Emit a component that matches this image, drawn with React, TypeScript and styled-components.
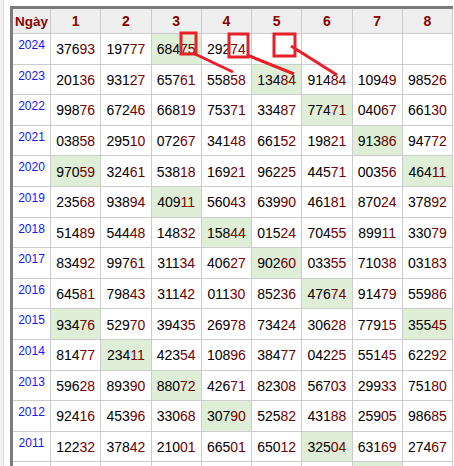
import React from "react";
import styled, { createGlobalStyle } from "styled-components";

const Global = createGlobalStyle`
  html, body { margin: 0; padding: 0; background: #ffffff; }
  body { font-family: "Liberation Sans", Arial, sans-serif; }
`;

const Page = styled.div`
  position: relative;
  display: flex;
  width: 454px;
  height: 466px;
  overflow: hidden;
`;

const SideStrip = styled.div`
  width: 3px;
  background: #f1f1f1;
  border-right: 1px solid #d6d6d6;
  flex: none;
`;

const Content = styled.div`
  padding: 6px 0 0 6px;
  flex: none;
`;

const Frame = styled.div`
  border-top: 3px solid #7b7b7b;
  border-left: 3px solid #7b7b7b;
`;

const Grid = styled.div`
  display: grid;
  grid-template-columns: 37px repeat(8, 49.25px);
  grid-template-rows: 24px;
  grid-auto-rows: 29.6px;
  gap: 1px;
  background: #cbcbcb;
  padding: 0 1px 1px 0;
`;

const HeadCell = styled.div<{ $wide?: boolean }>`
  background: #eeeeee;
  color: #8b0000;
  font-weight: bold;
  font-size: ${(p) => (p.$wide ? "14px" : "13.5px")};
  display: flex;
  align-items: center;
  justify-content: center;
`;

const YearCell = styled.div`
  background: #ffffff;
  color: #1414ff;
  font-size: 12px;
  text-align: center;
  padding-top: 4px;
`;

const NumCell = styled.div<{ $hit?: boolean }>`
  background: ${(p) => (p.$hit ? "#dfeed6" : "#ffffff")};
  color: #000000;
  font-size: 14px;
  display: flex;
  align-items: center;
  justify-content: center;
  padding-top: 1px;
`;

const Tail = styled.span`
  color: #720000;
`;

const Overlay = styled.svg`
  position: absolute;
  left: 0;
  top: 0;
  pointer-events: none;
`;

type Row = { year: string; nums: string[]; hits: number[] };

const rows: Row[] = [
  { year: "2024", nums: ["37693", "19777", "68475", "29274", "", "", "", ""], hits: [2] },
  { year: "2023", nums: ["20136", "93127", "65761", "55858", "13484", "91484", "10949", "98526"], hits: [4] },
  { year: "2022", nums: ["99876", "67246", "66819", "75371", "33487", "77471", "04067", "66130"], hits: [5] },
  { year: "2021", nums: ["03858", "29510", "07267", "34148", "66152", "19821", "91386", "94772"], hits: [6] },
  { year: "2020", nums: ["97059", "32461", "53818", "16921", "96225", "44571", "00356", "46411"], hits: [0, 7] },
  { year: "2019", nums: ["23568", "93894", "40911", "56043", "63990", "46181", "87024", "37892"], hits: [2] },
  { year: "2018", nums: ["51489", "54448", "14832", "15844", "01524", "70455", "89911", "33079"], hits: [3] },
  { year: "2017", nums: ["83492", "99761", "31134", "40627", "90260", "03355", "71038", "03183"], hits: [4] },
  { year: "2016", nums: ["64581", "79843", "31142", "01130", "85236", "47674", "91479", "55986"], hits: [5] },
  { year: "2015", nums: ["93476", "52970", "39435", "26978", "73424", "30628", "77915", "35545"], hits: [0, 7] },
  { year: "2014", nums: ["81477", "23411", "42354", "10896", "38477", "04225", "55145", "62292"], hits: [1] },
  { year: "2013", nums: ["59628", "89390", "88072", "42671", "82308", "56703", "29933", "75180"], hits: [2] },
  { year: "2012", nums: ["92416", "45396", "33068", "30790", "52582", "43188", "25905", "98685"], hits: [3] },
  { year: "2011", nums: ["12232", "37842", "21001", "66501", "65012", "32504", "63169", "27467"], hits: [5] },
  { year: "", nums: ["", "", "", "", "", "", "", ""], hits: [6] },
];

const Num = ({ v }: { v: string }) =>
  v ? (
    <>
      {v.slice(0, 3)}
      <Tail>{v.slice(3)}</Tail>
    </>
  ) : null;

export default function App() {
  return (
    <Page>
      <Global />
      <SideStrip />
      <Content>
        <Frame>
          <Grid>
            <HeadCell>Ngày</HeadCell>
            {[1, 2, 3, 4, 5, 6, 7, 8].map((n) => (
              <HeadCell key={n} $wide>
                {n}
              </HeadCell>
            ))}
            {rows.map((r, ri) => (
              <React.Fragment key={ri}>
                <YearCell>{r.year}</YearCell>
                {r.nums.map((v, i) => (
                  <NumCell key={i} $hit={r.hits.includes(i)}>
                    <Num v={v} />
                  </NumCell>
                ))}
              </React.Fragment>
            ))}
          </Grid>
        </Frame>
      </Content>
      <Overlay width="454" height="466" viewBox="0 0 454 466">
        <g fill="none" stroke="#e8202a" strokeWidth="3">
          <rect x="181" y="33" width="15" height="21" />
          <rect x="229" y="34" width="19" height="23" />
          <rect x="274" y="34" width="21" height="22" />
        </g>
        <g stroke="#e8202a" strokeWidth="3" strokeLinecap="butt">
          <line x1="195" y1="54" x2="233" y2="72" />
          <line x1="247" y1="55" x2="294" y2="74" />
          <line x1="291" y1="46" x2="337" y2="75" />
        </g>
      </Overlay>
    </Page>
  );
}
